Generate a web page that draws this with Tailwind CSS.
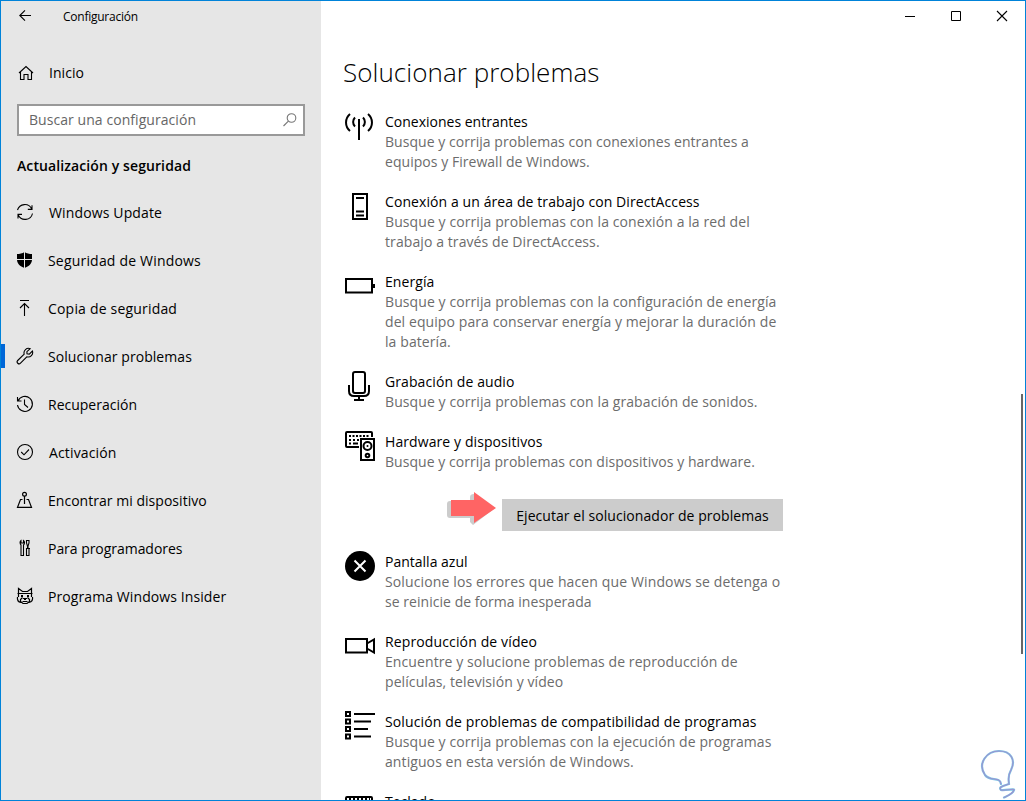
<!DOCTYPE html>
<html lang="es">
<head>
  <meta charset="UTF-8">
  <meta name="viewport" content="width=device-width, initial-scale=1.0">
  <title>Configuración</title>
  <script src="https://cdn.jsdelivr.net/npm/@tailwindcss/browser@4"></script>
</head>
<body class="h-[801px] w-[1026px] overflow-hidden bg-white font-['Open_Sans','Noto_Sans',sans-serif] text-[14px] leading-5 text-black">
  <div class="relative flex h-full w-full overflow-hidden border border-[#0083d9] whitespace-nowrap">

    <!-- Barra lateral -->
    <aside class="flex w-80 shrink-0 flex-col bg-[#e6e6e6] tracking-[0.06px]">
      <div class="flex h-8 items-center pl-[17px] text-[12px]">
        <svg class="mb-0.5 h-4 w-4" viewBox="0 0 16 16" fill="none" stroke="#000" stroke-width="1.1"><path d="M13 7.5H2M7 2.3 1.8 7.5 7 12.7"/></svg>
        <span class="ml-[29px] tracking-[-0.25px]">Configuración</span>
      </div>
      <a class="mt-4 flex h-12 items-center pl-4">
        <svg class="h-[18px] w-[18px]" viewBox="0 0 18 18" fill="none" stroke="#000" stroke-width="1.1"><path d="M2 9 9 2.5 16 9M3.5 8V15.5H7V10.5H11V15.5H14.5V8"/></svg>
        <span class="ml-[14px]">Inicio</span>
      </a>
      <div class="mt-[7px] ml-4 flex h-8 w-[288px] items-center justify-between border-2 border-[#999] bg-white pr-[5px] pl-2.5 text-[#666]">
        <span>Buscar una configuración</span>
        <svg class="h-4 w-4" viewBox="0 0 16 16" fill="none" stroke="#777" stroke-width="1.1"><circle cx="9.5" cy="6" r="4.3"/><path d="M6.4 9.1 1.5 14"/></svg>
      </div>
      <h2 class="mt-5 ml-4 font-semibold tracking-[0.1px]">Actualización y seguridad</h2>

      <nav class="mt-[13px] flex flex-col">
        <a class="flex h-12 items-center pl-[15px]">
          <svg class="mb-0.5 h-[18px] w-[18px]" viewBox="0 0 18 18" fill="none" stroke="#000" stroke-width="1.1"><path d="M1.5 7A7.6 7.6 0 0 1 15.7 6M16 2.2V6.4H11.8M16.5 10.5A7.6 7.6 0 0 1 2.2 12M2 15.6V11.4H6"/></svg>
          <span class="ml-[15px] tracking-[0.14px]">Windows Update</span>
        </a>
        <a class="flex h-12 items-center pl-[15px]">
          <svg class="mb-0.5 h-[18px] w-[18px]" viewBox="0 0 18 18"><path d="M8.5 1C6.5 2.6 3.5 3 1 3V8.5C1 12.5 4 15.5 8.5 17C13 15.5 16 12.5 16 8.5V3C13.5 3 10.5 2.6 8.5 1Z"/><path d="M8.5 1V17M1 8.5H16" stroke="#e6e6e6" fill="none"/></svg>
          <span class="ml-[14px] tracking-[0.19px]">Seguridad de Windows</span>
        </a>
        <a class="flex h-12 items-center pl-[15px]">
          <svg class="mb-0.5 h-[18px] w-[18px]" viewBox="0 0 18 18" fill="none" stroke="#000" stroke-width="1.1"><path d="M4 1.5H13M8.5 17V4.5M4 9 8.5 4.5 13 9"/></svg>
          <span class="ml-[14px] tracking-[0.19px]">Copia de seguridad</span>
        </a>
        <a class="flex h-12 items-center">
          <span class="mb-0.5 h-6 w-1 bg-[#0067d8]"></span>
          <svg class="mb-0.5 ml-[11px] h-[18px] w-[18px]" viewBox="0 0 18 18" fill="none" stroke="#000" stroke-width="1.1"><path d="M14.2 1.7A4.5 4.5 0 0 0 8.2 7.2L1.7 13.5A1.9 1.9 0 0 0 4.5 16.2L10.8 9.8A4.5 4.5 0 0 0 16.4 4L13.3 7.1 11 6.8 10.9 4.7Z"/></svg>
          <span class="ml-[14px]">Solucionar problemas</span>
        </a>
        <a class="flex h-12 items-center pl-[15px]">
          <svg class="mb-0.5 h-[18px] w-[18px]" viewBox="0 0 18 18" fill="none" stroke="#000" stroke-width="1.1"><path d="M1.5 2V6H5.5M2 6A7.5 7.5 0 1 1 1.5 10M8.5 4.5V9.5L12 12.5"/></svg>
          <span class="ml-[14px] tracking-normal">Recuperación</span>
        </a>
        <a class="flex h-12 items-center pl-[15px]">
          <svg class="mb-0.5 h-[18px] w-[18px]" viewBox="0 0 18 18" fill="none" stroke="#000" stroke-width="1.1"><circle cx="9" cy="9" r="7.5"/><path d="M5.2 9 8 11.8 13 6.5"/></svg>
          <span class="ml-[15px] tracking-[0.14px]">Activación</span>
        </a>
        <a class="flex h-12 items-center pl-[15px]">
          <svg class="mb-0.5 h-[18px] w-[18px]" viewBox="0 0 18 18" fill="none" stroke="#000" stroke-width="1.2"><circle cx="8.5" cy="3.2" r="1.9"/><path d="M8.5 5V13M6.5 8.5H4.5L1.5 16.4H15.5L12.5 8.5H10.5"/></svg>
          <span class="ml-[14px] tracking-[0.03px]">Encontrar mi dispositivo</span>
        </a>
        <a class="flex h-12 items-center pl-[15px]">
          <svg class="mb-0.5 h-[18px] w-[18px]" viewBox="0 0 18 18" fill="none" stroke="#000" stroke-width="1.1"><path d="M5 1.5C3.5 2.5 4 5 5 6V16.5H7.5V6C8.7 5 9 2.5 7.5 1.5V4H5ZM11.5 9V7L10.5 4V1.5H13V4L12 7V9M10 9.5H14M10.5 9.5H13V16.5H10.5Z"/></svg>
          <span class="ml-[14px] tracking-[-0.04px]">Para programadores</span>
        </a>
        <a class="flex h-12 items-center pl-[15px]">
          <svg class="mb-0.5 h-[18px] w-[18px]" viewBox="0 0 18 18" fill="none" stroke="#000" stroke-width="1.2"><path d="M2.5 10V1.5L6.5 4.5H11.5L15.5 1.5V10M1.5 6.5H16.5M1.5 10C1 13 2 15 5 15.5M16.5 10C17 13 16 15 13 15.5M6.5 10.5 4.5 12.5V14.5L7 16.5H11L13.5 14.5V12.5L11.5 10.5M7 11.5H11M6.5 14.5H11.5"/><path d="M5 8H7V10H5ZM11 8H13V10H11ZM8 11H10V13H8Z" fill="#000" stroke="none"/></svg>
          <span class="ml-[14px] tracking-[0.09px]">Programa Windows Insider</span>
        </a>
      </nav>
    </aside>

    <!-- Contenido -->
    <main class="flex min-w-0 flex-1 flex-col">
      <div class="flex h-[30px] shrink-0 items-center justify-end gap-[30px] pr-[15px]">
        <svg class="h-4 w-4" viewBox="0 0 16 16" stroke="#000"><path d="M3 8.5H13"/></svg>
        <svg class="h-4 w-4" viewBox="0 0 16 16" fill="none" stroke="#000"><path d="M3.5 3.5H12.5V12.5H3.5Z"/></svg>
        <svg class="h-4 w-4" viewBox="0 0 16 16" stroke="#000" stroke-width="1.1"><path d="M3 3 13 13M13 3 3 13"/></svg>
      </div>
      <h1 class="mt-[21px] ml-[22px] h-10 shrink-0 text-[26px] leading-10 font-[350] tracking-[0.05px]">Solucionar problemas</h1>

      <div class="mt-5 ml-6 flex flex-col gap-5 tracking-[0.09px] text-[#6c6c6c]">
        <section class="flex gap-2.5">
          <svg class="h-[30px] w-[30px] shrink-0" viewBox="0 0 30 30" fill="none" stroke="#000" stroke-width="2"><path d="M14 7V28M10 5.5C7.5 8 7.5 12 10 14.5M18 5.5C20.5 8 20.5 12 18 14.5M5 2C-.3 6.5-.3 14.5 5 19M23 2C28.3 6.5 28.3 14.5 23 19"/></svg>
          <div>
            <h3 class="tracking-normal text-black">Conexiones entrantes</h3>
            <p class="tracking-[0.04px]">Busque y corrija problemas con conexiones entrantes a<br>equipos y Firewall de Windows.</p>
          </div>
        </section>

        <section class="flex gap-2.5">
          <svg class="-mt-px h-[30px] w-[30px] shrink-0" viewBox="0 0 30 30" fill="none" stroke="#000" stroke-width="2"><path d="M8 3H22V28H8ZM11 7H19M11 20.5H19M11 24.5H19"/></svg>
          <div>
            <h3 class="text-black">Conexión a un área de trabajo con DirectAccess</h3>
            <p>Busque y corrija problemas con la conexión a la red del<br>trabajo a través de DirectAccess.</p>
          </div>
        </section>

        <section class="flex gap-2.5">
          <svg class="h-[30px] w-[30px] shrink-0" viewBox="0 0 30 30" fill="none" stroke="#000" stroke-width="2"><path d="M1 7H27V20.5H1ZM29 12V16"/></svg>
          <div>
            <h3 class="text-black">Energía</h3>
            <p>Busque y corrija problemas con la configuración de energía<br>del equipo para conservar energía y mejorar la duración de<br>la batería.</p>
          </div>
        </section>

        <section class="flex gap-2.5">
          <svg class="-mt-px h-[30px] w-[30px] shrink-0" viewBox="0 0 30 30" fill="none" stroke="#000" stroke-width="2"><rect x="8" y="1" width="12" height="21" rx="2"/><path d="M4 14V20Q4 25 9 25H19Q24 25 24 20V14M14 25V29M9 29H19"/></svg>
          <div>
            <h3 class="text-black">Grabación de audio</h3>
            <p>Busque y corrija problemas con la grabación de sonidos.</p>
          </div>
        </section>

        <section class="flex gap-2.5">
          <svg class="-mt-px h-[30px] w-[30px] shrink-0" viewBox="0 0 30 30" fill="none" stroke="#000" stroke-width="2"><path d="M14 16H2Q1 16 1 15V2Q1 1 2 1H26Q27 1 27 2V6"/><path d="M4 5H25" stroke-dasharray="2 1.5"/><path d="M4 9H6M8 9H10M12 9H14M4 12.5H6M8 12.5H13M16 8H29V29H16Z"/><circle cx="22.5" cy="15" r="4"/><circle cx="22.5" cy="15" r="1" fill="#000" stroke="none"/><circle cx="22.5" cy="24.5" r="1.8"/></svg>
          <div>
            <h3 class="text-black">Hardware y dispositivos</h3>
            <p class="tracking-[0.05px]">Busque y corrija problemas con dispositivos y hardware.</p>
            <div class="mt-[18px] -mb-px flex h-[43px] items-start pl-[61px]">
              <svg class="h-9 w-[56px] shrink-0" viewBox="0 0 56 36"><path d="M1 14Q1 11 4 11H24V7Q24 4 28 4L49 18 27 35 24 32V28H4Q1 28 1 25Z" fill="#ccc"/><path d="M5 10H28V2L50 18 28 33V26H5Z" fill="#ff6464"/></svg>
              <button class="mt-[9px] h-8 w-[281px] bg-[#ccc] pt-0.5 tracking-[0.06px] text-black">Ejecutar el solucionador de problemas</button>
            </div>
          </div>
        </section>

        <section class="flex gap-2.5">
          <svg class="-mt-px h-[30px] w-[30px] shrink-0" viewBox="0 0 30 30"><circle cx="15" cy="15" r="15"/><path d="M9.5 9.5 20.5 20.5M20.5 9.5 9.5 20.5" stroke="#fff" stroke-width="2"/></svg>
          <div>
            <h3 class="tracking-normal text-black">Pantalla azul</h3>
            <p class="tracking-[0.13px]">Solucione los errores que hacen que Windows se detenga o<br><span class="tracking-[0.04px]">se reinicie de forma inesperada</span></p>
          </div>
        </section>

        <section class="flex gap-2.5">
          <svg class="h-[30px] w-[30px] shrink-0" viewBox="0 0 30 30" fill="none" stroke="#000" stroke-width="2"><path d="M1 7H22V20.5H1ZM22 11.5 29 7.5V20.5L22 16.5"/></svg>
          <div>
            <h3 class="tracking-[0.13px] text-black">Reproducción de vídeo</h3>
            <p>Encuentre y solucione problemas de reproducción de<br>películas, televisión y vídeo</p>
          </div>
        </section>

        <section class="flex gap-2.5">
          <svg class="-mt-px h-[30px] w-[30px] shrink-0" viewBox="0 0 30 30" fill="none" stroke="#000" stroke-width="2"><path d="M1 1H5V5H1ZM1 8.5H5V12.5H1ZM1 16H5V20H1ZM1 23.5H5V27.5H1ZM9 3H30M9 10.5H26M9 18H23M9 25.5H26"/></svg>
          <div>
            <h3 class="tracking-[0.13px] text-black">Solución de problemas de compatibilidad de programas</h3>
            <p>Busque y corrija problemas con la ejecución de programas<br>antiguos en esta versión de Windows.</p>
          </div>
        </section>

        <section class="flex gap-2.5">
          <svg class="h-[30px] w-[30px] shrink-0" viewBox="0 0 30 30" fill="none" stroke="#000" stroke-width="2"><path d="M1 22V6Q1 5 2 5H26Q27 5 27 6V22Z"/><path d="M4 7H25" stroke-dasharray="2 2"/></svg>
          <div>
            <h3 class="tracking-normal text-black">Teclado</h3>
          </div>
        </section>
      </div>
    </main>

    <!-- Barra de desplazamiento -->
    <div class="absolute top-[393px] right-[2px] h-[260px] w-[2px] bg-[#666]"></div>

    <!-- Marca de agua -->
    <svg class="absolute top-[748px] left-[978px] h-[52px] w-[40px]" viewBox="0 0 40 52" fill="none" stroke-linecap="round"><path d="M22 35C21 27 11 33 6 26C-2 14 8 2 20 2C32 2 37 11 32 21C28 28 30 32 30 35C24 37 19 38 22 41C26 42 36 39 35 41C34 45 28 47 25 48.5" stroke="#7fc4e4" stroke-width="2.2"/><path d="M22 35C21 27 11 33 6 26C-2 14 8 2 20 2C32 2 37 11 32 21C28 28 30 32 30 35C24 37 19 38 22 41C26 42 36 39 35 41C34 45 28 47 25 48.5" stroke="#9a92d0" stroke-width="1.1"/></svg>
  </div>
</body>
</html>
